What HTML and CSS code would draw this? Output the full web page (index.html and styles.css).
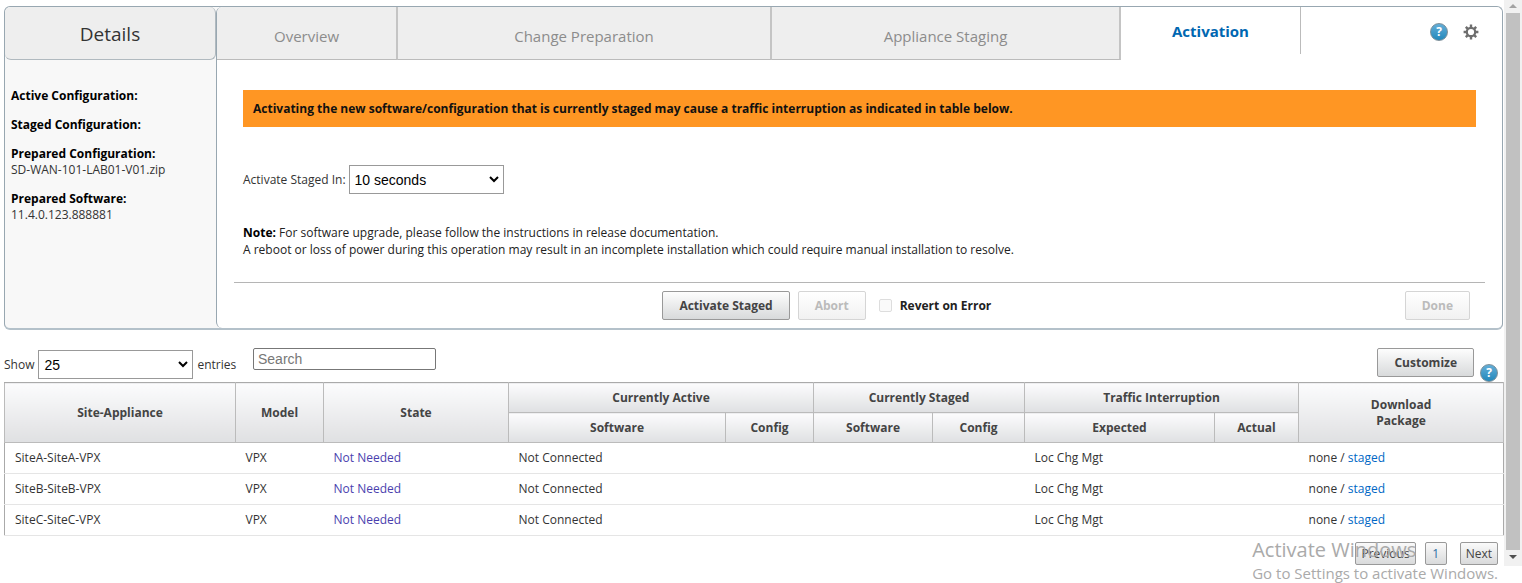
FILE: index.html
```html
<!DOCTYPE html>
<html lang="en">
<head>
<meta charset="utf-8">
<title>Change Management - Activation</title>
<link rel="stylesheet" href="styles.css">
</head>
<body>
<div class="page">
  <div class="content">
    <div class="panel">
      <aside class="sidebar">
        <h1 class="sidebar-title">Details</h1>
        <dl class="details">
          <div><dt>Active Configuration:</dt></div>
          <div><dt>Staged Configuration:</dt></div>
          <div><dt>Prepared Configuration:</dt><dd>SD-WAN-101-LAB01-V01.zip</dd></div>
          <div><dt>Prepared Software:</dt><dd>11.4.0.123.888881</dd></div>
        </dl>
      </aside>
      <main class="main">
        <nav class="tabs">
          <a class="tab" href="#overview">Overview</a>
          <a class="tab" href="#preparation">Change Preparation</a>
          <a class="tab" href="#staging">Appliance Staging</a>
          <a class="tab active" href="#activation">Activation</a>
          <div class="tools">
            <button class="help" type="button" aria-label="Help">?</button>
            <button class="gear" type="button" aria-label="Settings">
              <svg viewBox="0 0 16 16" width="16" height="16"><g stroke="#6e6e6e" fill="none"><circle cx="8" cy="8" r="4.2" stroke-width="2.2"/><path stroke-width="2.4" d="M8 .6v3M8 12.4v3M.6 8h3M12.4 8h3M2.8 2.8l2 2M11.2 11.2l2 2M2.8 13.2l2-2M11.2 4.8l2-2"/></g></svg>
            </button>
          </div>
        </nav>
        <section class="body">
          <p class="banner">Activating the new software/configuration that is currently staged may cause a traffic interruption as indicated in table below.</p>
          <div class="field">
            <label for="delay">Activate Staged In:</label>
            <span class="select"><select id="delay"><option>10 seconds</option></select><svg viewBox="0 0 10 7" width="10" height="7"><path d="M1 1l4 4 4-4" fill="none" stroke="#000" stroke-width="2"/></svg></span>
          </div>
          <p class="note"><b>Note:</b> For software upgrade, please follow the instructions in release documentation.<br>A reboot or loss of power during this operation may result in an incomplete installation which could require manual installation to resolve.</p>
        </section>
        <footer class="actions">
          <div class="actions-mid">
            <button class="btn" type="button">Activate Staged</button>
            <button class="btn" type="button" disabled>Abort</button>
            <label class="revert"><input type="checkbox" disabled><span>Revert on Error</span></label>
          </div>
          <button class="btn" type="button" disabled>Done</button>
        </footer>
      </main>
    </div>

    <div class="toolbar">
      <div class="length">
        <label for="len">Show</label>
        <span class="select"><select id="len"><option>25</option></select><svg viewBox="0 0 10 7" width="10" height="7"><path d="M1 1l4 4 4-4" fill="none" stroke="#000" stroke-width="2"/></svg></span>
        <span>entries</span>
      </div>
      <input class="search" type="text" placeholder="Search" aria-label="Search">
      <div class="toolbar-right">
        <button class="btn" type="button">Customize</button>
        <button class="help" type="button" aria-label="Help">?</button>
      </div>
    </div>

    <table class="grid">
      <colgroup><col class="c-site"><col class="c-model"><col class="c-state"><col class="c-asw"><col class="c-acfg"><col class="c-ssw"><col class="c-scfg"><col class="c-exp"><col class="c-act"><col class="c-dl"></colgroup>
      <thead>
        <tr><th rowspan="2">Site-Appliance</th><th rowspan="2">Model</th><th rowspan="2">State</th><th colspan="2">Currently Active</th><th colspan="2">Currently Staged</th><th colspan="2">Traffic Interruption</th><th rowspan="2">Download<br>Package</th></tr>
        <tr><th>Software</th><th>Config</th><th>Software</th><th>Config</th><th>Expected</th><th>Actual</th></tr>
      </thead>
      <tbody>
        <tr><td>SiteA-SiteA-VPX</td><td>VPX</td><td class="state">Not Needed</td><td>Not Connected</td><td></td><td></td><td></td><td>Loc Chg Mgt</td><td></td><td>none / <a href="#a">staged</a></td></tr>
        <tr><td>SiteB-SiteB-VPX</td><td>VPX</td><td class="state">Not Needed</td><td>Not Connected</td><td></td><td></td><td></td><td>Loc Chg Mgt</td><td></td><td>none / <a href="#b">staged</a></td></tr>
        <tr><td>SiteC-SiteC-VPX</td><td>VPX</td><td class="state">Not Needed</td><td>Not Connected</td><td></td><td></td><td></td><td>Loc Chg Mgt</td><td></td><td>none / <a href="#c">staged</a></td></tr>
      </tbody>
    </table>

    <div class="pager">
      <button type="button">Previous</button>
      <button type="button">1</button>
      <button type="button">Next</button>
    </div>
  </div>
  <div class="scrollbar">
    <svg viewBox="0 0 8 4" width="8" height="4"><path d="M0 4l4-4 4 4z" fill="#a3a3a3"/></svg>
    <div class="thumb"></div>
    <svg viewBox="0 0 8 4" width="8" height="4"><path d="M0 0l4 4 4-4z" fill="#505050"/></svg>
  </div>
  <div class="watermark"><div class="wm-title">Activate Windows</div><div class="wm-text">Go to Settings to activate Windows.</div></div>
</div>
</body>
</html>
```
FILE: styles.css
```css
* { box-sizing: border-box; }
body {
  margin: 0;
  background: #fff;
  color: #333;
  font-family: "Open Sans", "Noto Sans", sans-serif;
  font-size: 12px;
  line-height: 16px;
}
h1, p, dl, dd { margin: 0; }
button, input, select { font: inherit; margin: 0; }
a { color: #0067c5; text-decoration: none; }

.page { display: flex; position: relative; min-height: 100vh; }
.content { flex: 1; min-width: 0; padding: 6px 1px 0 4px; }

.panel {
  display: flex;
  border: 1px solid #98a7b1;
  border-bottom: 2px solid #b4c1ca;
  border-radius: 6px;
  background: #f8f8f8;
}
.sidebar { width: 211px; flex: none; }
.sidebar-title {
  height: 53px;
  border: 1px solid #b0b9bf;
  border-top: 0;
  border-left: 0;
  border-radius: 6px;
  background: #eee;
  font-size: 19px;
  font-weight: 400;
  line-height: 54px;
  text-align: center;
}
.details { display: grid; gap: 13px; padding: 28px 6px; }
.details dt { font-weight: 700; color: #000; }

.main {
  flex: 1;
  min-width: 0;
  border-left: 1px solid #98a7b1;
  border-radius: 6px;
  background: #fff;
}
.tabs {
  display: grid;
  grid-template-columns: 181fr 374fr 349fr 180fr 201fr;
  height: 53px;
}
.tab {
  height: 53px;
  border-right: 2px solid #c4c4c4;
  border-bottom: 1px solid #bbb;
  background: #eee;
  color: #8c8c8c;
  font-size: 15px;
  line-height: 59px;
  text-align: center;
}
.tab:first-child { border-top-left-radius: 6px; }
.tab.active {
  height: 47px;
  border-right: 1px solid #bbb;
  border-bottom: 0;
  background: #fff;
  color: #0067b1;
  font-weight: 700;
  line-height: 49px;
}
.tools { display: flex; justify-content: flex-end; align-items: center; gap: 15px; height: 50px; padding-right: 23px; }
.help {
  width: 18px;
  height: 18px;
  padding: 0;
  border: 1px solid #7c8f99;
  border-radius: 50%;
  background: linear-gradient(#63aed8, #2388bb);
  color: #fff;
  font-weight: 700;
  line-height: 16px;
}
.gear { display: flex; padding: 0; border: 0; background: none; }

.body { padding: 30px 26px 24px; }
.banner {
  padding: 10px;
  background: #ff9623;
  color: #111;
  font-weight: 700;
  line-height: 17px;
}
.field { display: flex; align-items: center; gap: 3px; margin-top: 38px; }
.select { display: inline-flex; position: relative; }
.select select {
  width: 155px;
  height: 29px;
  padding: 0 5px;
  border: 1px solid #999;
  border-radius: 0;
  background: #fff;
  appearance: none;
  color: #000;
  font-family: "Liberation Sans", sans-serif;
  font-size: 14px;
}
.select svg { position: absolute; right: 5px; top: 11px; pointer-events: none; }
.note { margin-top: 30px; color: #222; line-height: 17px; }
.note b { color: #000; }

.actions {
  display: flex;
  align-items: center;
  margin: 0 17px;
  padding: 8px 15px;
  border-top: 1px solid #b5b5b5;
}
.actions-mid { display: flex; flex: 1; justify-content: center; align-items: center; gap: 8px; }
.btn {
  height: 29px;
  padding: 0 16px;
  border: 1px solid #999;
  border-radius: 2px;
  background: linear-gradient(#fdfdfd, #d8dadb);
  color: #444;
  font-weight: 700;
}
.btn:disabled { border-color: #d5d5d5; background: linear-gradient(#fff, #f1f1f1); color: #bbb; }
.revert { display: flex; align-items: center; gap: 8px; padding-left: 5px; color: #222; font-weight: 700; }
.revert input { appearance: none; width: 13px; height: 13px; border: 1px solid #ddd; border-radius: 2px; background: #fafafa; }

.toolbar { display: flex; align-items: flex-start; height: 52px; padding-top: 18px; }
.length { display: flex; align-items: center; gap: 4px; width: 249px; padding-top: 2px; }
.search {
  width: 183px;
  height: 22px;
  padding: 0 4px;
  border: 1px solid #777;
  border-radius: 2px;
  font-family: "Liberation Sans", sans-serif;
  font-size: 14px;
}
.search::placeholder { color: #777; }
.toolbar-right { display: flex; align-items: flex-end; gap: 6px; height: 34px; margin-left: auto; padding-right: 5px; }
.toolbar-right .btn { align-self: flex-start; }

.grid {
  width: 100%;
  table-layout: fixed;
  border-collapse: collapse;
  border: 1px solid #aaa;
  border-bottom-color: #ddd;
}
.c-site { width: 231px; }
.c-model, .c-acfg { width: 88px; }
.c-state { width: 185px; }
.c-asw { width: 217px; }
.c-ssw { width: 119px; }
.c-scfg { width: 92px; }
.c-exp { width: 190px; }
.c-act { width: 84px; }
.c-dl { width: 205px; }
.grid th {
  height: 30px;
  padding: 0;
  border: 1px solid #bbb;
  border-top-color: #aaa;
  background: linear-gradient(#fcfcfd, #dfe0e2);
  color: #444;
}
.grid td { height: 31px; padding: 0 10px; border-bottom: 1px solid #e5e5e5; }
.grid .state { color: #4a3fae; }

.pager { display: flex; justify-content: flex-end; gap: 9px; margin-top: 6px; padding-right: 5px; }
.pager button {
  min-width: 22px;
  height: 23px;
  padding: 0 5px;
  border: 1px solid #999;
  border-radius: 2px;
  background: linear-gradient(#fafafa, #d9dadb);
  color: #444;
}
.pager button:nth-child(2) { color: #2d6ea3; }
.pager button:last-child { margin-left: 4px; }

.scrollbar {
  display: flex;
  flex-direction: column;
  align-items: center;
  gap: 5px;
  width: 18px;
  margin-bottom: 17px;
  padding: 4px 2px 7px;
  background: #f1f1f1;
}
.scrollbar svg { flex: none; }
.thumb { flex: 1; width: 14px; background: #c1c1c1; }

.watermark { position: absolute; right: 24px; bottom: 0; color: #aaa; pointer-events: none; white-space: nowrap; }
.wm-title { font-size: 20px; line-height: 26px; }
.wm-text { font-size: 15px; line-height: 20px; }
```
